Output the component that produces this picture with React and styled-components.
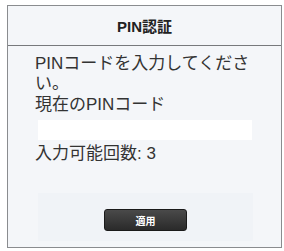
import styled, { createGlobalStyle } from "styled-components";

const GlobalStyle = createGlobalStyle`
  html, body {
    margin: 0;
    padding: 0;
    background: #ffffff;
    font-family: "Liberation Sans", "Noto Sans CJK JP", sans-serif;
  }
`;

const Page = styled.div`
  width: 284px;
  height: 251px;
  padding: 5px 2px 3px 7px;
  box-sizing: border-box;
`;

const Dialog = styled.div`
  height: 100%;
  display: flex;
  flex-direction: column;
  border: 1.5px solid #8a8c8f;
  background: #f4f6f9;
  box-sizing: border-box;
`;

const Header = styled.div`
  height: 39px;
  display: flex;
  align-items: center;
  justify-content: center;
  border-bottom: 1.5px solid #77797c;
  font-size: 15px;
  font-weight: bold;
  color: #222;
`;

const Body = styled.div`
  flex: 1;
  display: flex;
  flex-direction: column;
  padding: 8px 28px 0 27px;
  color: #333;
  font-size: 17px;
  line-height: 19.5px;
`;

const Text = styled.p`
  margin: 0;
  margin-top: ${(p) => p.$top || 0}px;
`;

const PinInput = styled.input`
  display: block;
  margin: 5px 0 4px 3px;
  width: 214px;
  height: 20px;
  border: none;
  background: #ffffff;
  box-sizing: border-box;
  outline: none;
`;

const Footer = styled.div`
  flex: 1;
  display: flex;
  align-items: center;
  justify-content: center;
  margin: 30px 0 6px 3px;
  padding-top: 6px;
  background: #f0f3f7;
`;

const ApplyButton = styled.button`
  width: 83px;
  height: 22px;
  border: 1px solid #1a1a1a;
  border-radius: 3px;
  background: linear-gradient(#4a4a4a, #2a2a2a);
  color: #fff;
  font-family: "Liberation Sans", "Noto Sans CJK JP", sans-serif;
  font-size: 10px;
  font-weight: bold;
  padding: 0;
`;

export default function App() {
  return (
    <>
      <GlobalStyle />
      <Page>
        <Dialog>
          <Header>PIN認証</Header>
          <Body>
            <Text>PINコードを入力してください。</Text>
            <Text $top={2}>現在のPINコード</Text>
            <PinInput type="password" />
            <Text>入力可能回数: 3</Text>
            <Footer>
              <ApplyButton>適用</ApplyButton>
            </Footer>
          </Body>
        </Dialog>
      </Page>
    </>
  );
}
